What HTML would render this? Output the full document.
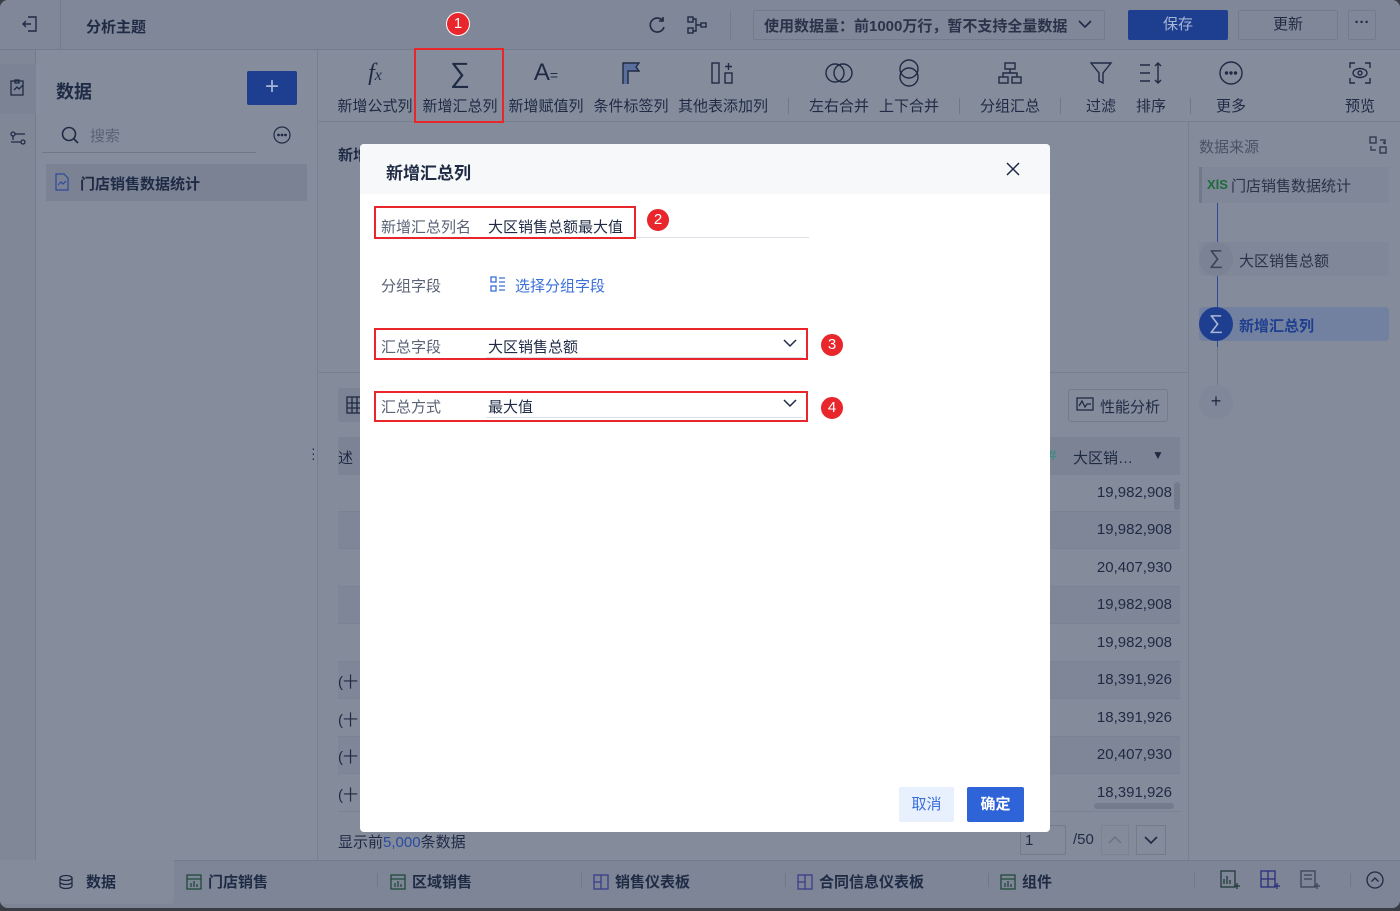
<!DOCTYPE html>
<html><head><meta charset="utf-8">
<style>
*{box-sizing:border-box;margin:0;padding:0}
body{width:1400px;height:911px;overflow:hidden;background:#3a3d44;font-family:"Liberation Sans","Noto Sans CJK SC",sans-serif;font-size:15px;color:#1f2a44;position:relative}
.a{position:absolute}
.app{position:absolute;left:0;top:0;width:1400px;height:908px;background:#848c9c;border-radius:8px;overflow:hidden}
.top{left:0;top:0;width:1400px;height:50px;background:#7f8798;border-bottom:1px solid #737b8c}
.rail{left:0;top:50px;width:36px;height:810px;background:#808898;border-right:1px solid #747c8d}
.lp{left:36px;top:50px;width:282px;height:810px;background:#858d9d;border-right:1px solid #777f90}
.tb{left:318px;top:50px;width:1082px;height:72px;background:#858d9d;border-bottom:1px solid #777f90}
.tool{position:absolute;top:56px;text-align:center;font-size:15px;color:#1f2a44}
.tool .ic{height:34px;display:flex;align-items:center;justify-content:center}
.tool .lb{margin-top:5px;white-space:nowrap;margin-left:-10px;margin-right:-10px}
.rp{left:1188px;top:122px;width:212px;height:738px;background:#848c9c;border-left:1px solid #777f90}
.bot{left:0;top:860px;width:1400px;height:48px;background:#7d8596;border-top:1px solid #737b8c}
.tab{position:absolute;top:871px;font-size:15px;font-weight:bold;color:#1f2a44;display:flex;align-items:center;gap:6px}
.row{position:absolute;left:338px;width:842px;height:37px;border-bottom:1px solid #7a8293}
.num{position:absolute;right:8px;top:9px;font-size:15px;color:#1f2a44}
.modal{left:360px;top:144px;width:690px;height:688px;background:#fff;border-radius:4px;overflow:hidden}
.mh{position:absolute;left:0;top:0;width:690px;height:50px;background:#f7f8fa}
.red{position:absolute;border:2px solid #e8262b}
.badge{position:absolute;width:24px;height:24px;border-radius:50%;background:#e8262b;color:#fff;font-size:15px;text-align:center;line-height:22px;border:1px solid #fff}
.lbl{position:absolute;font-size:15px;color:#5a6275}
.val{position:absolute;font-size:15px;color:#1f2a44}
.line{position:absolute;height:1px;background:#dcdfe6}
</style></head><body>
<div class="app">
<div class="a top">
  <svg class="a" style="left:20px;top:14px" width="20" height="20" viewBox="0 0 20 20" fill="none" stroke="#1f2a44" stroke-width="1.4"><path d="M8 3h8v14H8M11 10H3M6 7l-3 3 3 3"/></svg>
  <div class="a" style="left:60px;top:0;width:1px;height:50px;background:#737b8c"></div>
  <div class="a" style="left:86px;top:16px;font-weight:bold;font-size:15px">分析主题</div>
  <svg class="a" style="left:646px;top:14px" width="22" height="22" viewBox="0 0 22 22" fill="none" stroke="#1f2a44" stroke-width="1.6"><path d="M17 7a7 7 0 1 0 1 6M17 3v4h-4"/></svg>
  <svg class="a" style="left:686px;top:14px" width="22" height="22" viewBox="0 0 22 22" fill="none" stroke="#1f2a44" stroke-width="1.4"><rect x="2" y="3" width="5" height="5"/><rect x="2" y="14" width="5" height="5"/><rect x="15" y="9" width="5" height="4"/><path d="M7 5h3v12H7M10 11h5"/></svg>
  <div class="a" style="left:730px;top:10px;width:1px;height:30px;background:#737b8c"></div>
  <div class="a" style="left:753px;top:10px;width:352px;height:30px;border:1px solid #737b8c;border-radius:2px;font-size:15px;padding:4px 10px;color:#2a3349;font-weight:bold">使用数据量：前1000万行，暂不支持全量数据</div>
  <svg class="a" style="left:1078px;top:19px" width="14" height="10" viewBox="0 0 14 10" fill="none" stroke="#1f2a44" stroke-width="1.6"><path d="M1 2l6 6 6-6"/></svg>
  <div class="a" style="left:1128px;top:10px;width:100px;height:30px;background:#1e3f8f;border-radius:2px;color:#a8b6d6;text-align:center;line-height:30px">保存</div>
  <div class="a" style="left:1238px;top:10px;width:100px;height:30px;border:1px solid #737b8c;border-radius:2px;text-align:center;line-height:28px">更新</div>
  <div class="a" style="left:1348px;top:10px;width:28px;height:30px;border:1px solid #737b8c;border-radius:2px;text-align:center;line-height:24px;font-weight:bold">···</div>
</div>
<div class="a rail">
  <div class="a" style="left:0;top:14px;width:36px;height:50px;background:#7b8394"></div>
  <svg class="a" style="left:8px;top:28px" width="20" height="20" viewBox="0 0 20 20" fill="none" stroke="#1f2a44" stroke-width="1.3"><rect x="3" y="3" width="12" height="14"/><path d="M7 2h4v3H7zM6 12l3-3 2 2 4-4"/></svg>
  <svg class="a" style="left:8px;top:78px" width="20" height="20" viewBox="0 0 20 20" fill="none" stroke="#1f2a44" stroke-width="1.3"><circle cx="5" cy="6" r="2"/><circle cx="15" cy="14" r="2"/><path d="M7 6h10M3 14h10M5 8v4"/></svg>
</div>
<div class="a lp">
  <div class="a" style="left:20px;top:28px;font-size:18px;font-weight:bold">数据</div>
  <div class="a" style="left:211px;top:21px;width:50px;height:34px;background:#1e3f8f;border-radius:2px;color:#a8b6d6;font-size:24px;text-align:center;line-height:32px">+</div>
  <svg class="a" style="left:24px;top:75px" width="20" height="20" viewBox="0 0 20 20" fill="none" stroke="#1f2a44" stroke-width="1.6"><circle cx="9" cy="9" r="6.5"/><path d="M14 14l4 4"/></svg>
  <div class="a" style="left:54px;top:75px;color:#5a6275;font-size:15px">搜索</div>
  <div class="a" style="left:6px;top:102px;width:214px;height:1px;background:#6f7788"></div>
  <svg class="a" style="left:236px;top:75px" width="20" height="20" viewBox="0 0 20 20" fill="none" stroke="#1f2a44" stroke-width="1.2"><circle cx="10" cy="10" r="8"/><circle cx="6.5" cy="10" r=".8" fill="#1f2a44"/><circle cx="10" cy="10" r=".8" fill="#1f2a44"/><circle cx="13.5" cy="10" r=".8" fill="#1f2a44"/></svg>
  <div class="a" style="left:10px;top:114px;width:261px;height:37px;background:#7a8294"></div>
  <svg class="a" style="left:18px;top:123px" width="16" height="18" viewBox="0 0 16 18" fill="none" stroke="#2d4a9a" stroke-width="1.2"><path d="M2 1h8l4 4v12H2z"/><path d="M4 12l3-3 2 2 3-3"/></svg>
  <div class="a" style="left:44px;top:123px;font-weight:bold;font-size:15px">门店销售数据统计</div>
</div>
<div class="a tb"></div>
<div class="tool" style="left:336px;width:78px"><div class="ic"><span style="font-family:'Liberation Serif',serif;font-style:italic;font-size:24px">f<span style="font-size:16px">x</span></span></div><div class="lb">新增公式列</div></div>
<div class="tool" style="left:420px;width:80px"><div class="ic"><span style="font-size:28px;font-weight:300">&#8721;</span></div><div class="lb">新增汇总列</div></div>
<div class="tool" style="left:506px;width:80px"><div class="ic"><span style="font-size:24px">A<span style="font-size:14px">=</span></span></div><div class="lb">新增赋值列</div></div>
<div class="tool" style="left:591px;width:80px"><div class="ic"><svg width="22" height="24" viewBox="0 0 22 24" fill="none" stroke="#1f2a44" stroke-width="1.4"><path d="M3 23V2h16l-3 4 3 4H8v13" fill="#5b6f9e"/></svg></div><div class="lb">条件标签列</div></div>
<div class="tool" style="left:676px;width:94px"><div class="ic"><svg width="26" height="24" viewBox="0 0 26 24" fill="none" stroke="#1f2a44" stroke-width="1.4"><rect x="2" y="2" width="7" height="20"/><rect x="15" y="12" width="7" height="10"/><path d="M18.5 2v7M15 5.5h7"/></svg></div><div class="lb">其他表添加列</div></div>
<div class="a" style="left:788px;top:98px;width:1px;height:16px;background:#6f7788"></div>
<div class="tool" style="left:806px;width:66px"><div class="ic"><svg width="30" height="24" viewBox="0 0 30 24" fill="none" stroke="#1f2a44" stroke-width="1.4"><circle cx="11" cy="12" r="9"/><circle cx="19" cy="12" r="9"/></svg></div><div class="lb">左右合并</div></div>
<div class="tool" style="left:876px;width:66px"><div class="ic"><svg width="24" height="30" viewBox="0 0 24 30" fill="none" stroke="#1f2a44" stroke-width="1.4"><circle cx="12" cy="11" r="9"/><circle cx="12" cy="19" r="9"/></svg></div><div class="lb">上下合并</div></div>
<div class="a" style="left:959px;top:98px;width:1px;height:16px;background:#6f7788"></div>
<div class="tool" style="left:977px;width:66px"><div class="ic"><svg width="26" height="24" viewBox="0 0 26 24" fill="none" stroke="#1f2a44" stroke-width="1.4"><rect x="8" y="2" width="10" height="6"/><rect x="2" y="16" width="9" height="6"/><rect x="15" y="16" width="9" height="6"/><path d="M13 8v4M6 16v-4h14v4"/></svg></div><div class="lb">分组汇总</div></div>
<div class="a" style="left:1060px;top:98px;width:1px;height:16px;background:#6f7788"></div>
<div class="tool" style="left:1078px;width:46px"><div class="ic"><svg width="24" height="26" viewBox="0 0 24 26" fill="none" stroke="#1f2a44" stroke-width="1.4"><path d="M2 3h20l-8 10v10l-4-2v-8z"/></svg></div><div class="lb">过滤</div></div>
<div class="tool" style="left:1128px;width:46px"><div class="ic"><svg width="26" height="24" viewBox="0 0 26 24" fill="none" stroke="#1f2a44" stroke-width="1.4"><path d="M2 4h10M2 12h10M2 20h10M20 2v20M17 5l3-3 3 3M17 19l3 3 3-3"/></svg></div><div class="lb">排序</div></div>
<div class="a" style="left:1190px;top:98px;width:1px;height:16px;background:#6f7788"></div>
<div class="tool" style="left:1208px;width:46px"><div class="ic"><svg width="26" height="26" viewBox="0 0 26 26" fill="none" stroke="#1f2a44" stroke-width="1.4"><circle cx="13" cy="13" r="11"/><circle cx="8.5" cy="13" r="1" fill="#1f2a44"/><circle cx="13" cy="13" r="1" fill="#1f2a44"/><circle cx="17.5" cy="13" r="1" fill="#1f2a44"/></svg></div><div class="lb">更多</div></div>
<div class="tool" style="left:1337px;width:46px"><div class="ic"><svg width="24" height="24" viewBox="0 0 24 24" fill="none" stroke="#1f2a44" stroke-width="1.4"><path d="M2 7V2h5M17 2h5v5M22 17v5h-5M7 22H2v-5"/><ellipse cx="12" cy="12" rx="7" ry="4.5"/><circle cx="12" cy="12" r="2"/></svg></div><div class="lb">预览</div></div>
<div class="red" style="left:414px;top:48px;width:90px;height:75px"></div>
<div class="badge" style="left:446px;top:12px">1</div>

<div class="a" style="left:338px;top:144px;font-weight:bold">新增</div>
<div class="a" style="left:318px;top:372px;width:870px;height:1px;background:#777f90"></div>
<div class="a" style="left:338px;top:388px;width:30px;height:34px;background:#7b8394;border-radius:3px"></div>
<svg class="a" style="left:346px;top:396px" width="16" height="18" viewBox="0 0 16 18" fill="none" stroke="#1f2a44" stroke-width="1.3"><rect x="1" y="1" width="14" height="16"/><path d="M1 7h14M1 12h14M6 1v16M11 1v16"/></svg>
<div class="a" style="left:311px;top:446px;color:#1f2a44;font-size:14px;line-height:5px">·<br>·<br>·</div>
<div class="a" style="left:1068px;top:389px;width:100px;height:33px;border:1px solid #737b8c;border-radius:3px;font-size:15px;padding:6px 0 0 31px">性能分析</div>
<svg class="a" style="left:1076px;top:397px" width="18" height="16" viewBox="0 0 18 16" fill="none" stroke="#1f2a44" stroke-width="1.3"><rect x="1" y="1" width="16" height="12"/><path d="M3 9l3-5 3 6 2-3h4"/></svg>
<div class="a" style="left:338px;top:437px;width:842px;height:38px;background:#7b8395"></div>
<div class="a" style="left:338px;top:447px">述</div>
<div class="a" style="left:1048px;top:447px;color:#2e8a80">#</div>
<div class="a" style="left:1073px;top:447px">大区销…</div>
<div class="a" style="left:1152px;top:448px;font-size:12px">▼</div>
<div class="row" style="top:475px;background:#848c9c"><span class="num">19,982,908</span></div>
<div class="row" style="top:512px;background:#7e8697"><span class="num">19,982,908</span></div>
<div class="row" style="top:550px;background:#848c9c"><span class="num">20,407,930</span></div>
<div class="row" style="top:587px;background:#7e8697"><span class="num">19,982,908</span></div>
<div class="row" style="top:625px;background:#848c9c"><span class="num">19,982,908</span></div>
<div class="row" style="top:662px;background:#7e8697"><span class="num">18,391,926</span><span style="position:absolute;left:0;top:9px">(十</span></div>
<div class="row" style="top:700px;background:#848c9c"><span class="num">18,391,926</span><span style="position:absolute;left:0;top:9px">(十</span></div>
<div class="row" style="top:737px;background:#7e8697"><span class="num">20,407,930</span><span style="position:absolute;left:0;top:9px">(十</span></div>
<div class="row" style="top:775px;background:#848c9c"><span class="num">18,391,926</span><span style="position:absolute;left:0;top:9px">(十</span></div>
<div class="a" style="left:1174px;top:482px;width:6px;height:28px;background:#737b8c;border-radius:3px"></div>
<div class="a" style="left:1094px;top:803px;width:80px;height:6px;background:#737b8c;border-radius:3px"></div>
<div class="a" style="left:338px;top:831px">显示前<span style="color:#2b4aa0">5,000</span>条数据</div>
<div class="a" style="left:1020px;top:825px;width:46px;height:30px;border:1px solid #737b8c;border-radius:2px;padding:6px 0 0 4px">1</div>
<div class="a" style="left:1073px;top:831px">/50</div>
<div class="a" style="left:1101px;top:825px;width:28px;height:30px;border:1px solid #7a8293"></div>
<svg class="a" style="left:1108px;top:835px" width="14" height="10" viewBox="0 0 14 10" fill="none" stroke="#6a7284" stroke-width="1.5"><path d="M1 8l6-6 6 6"/></svg>
<div class="a" style="left:1136px;top:825px;width:30px;height:30px;border:1px solid #737b8c"></div>
<svg class="a" style="left:1144px;top:835px" width="14" height="10" viewBox="0 0 14 10" fill="none" stroke="#1f2a44" stroke-width="1.6"><path d="M1 2l6 6 6-6"/></svg>

<div class="a rp">
  <div class="a" style="left:10px;top:14px;color:#4a5265;font-size:15px">数据来源</div>
  <svg class="a" style="left:180px;top:14px" width="18" height="18" viewBox="0 0 18 18" fill="none" stroke="#2a3349" stroke-width="1.3"><rect x="1" y="1" width="6" height="6"/><rect x="11" y="11" width="6" height="6"/><path d="M11 4h5v4M14 6l2 2M7 14H2v-4"/></svg>
  <div class="a" style="left:10px;top:45px;width:190px;height:36px;background:#7f8798;border-left:3px solid #707889"></div>
  <div class="a" style="left:18px;top:55px;color:#1f6b3a;font-size:13px;font-weight:bold">XlS</div>
  <div class="a" style="left:42px;top:53px;color:#2a3349">门店销售数据统计</div>
  <div class="a" style="left:28px;top:81px;width:1px;height:200px;background:#2d4a9a"></div>
  <div class="a" style="left:28px;top:225px;width:1px;height:50px;background:#6f7788"></div>
  <div class="a" style="left:10px;top:120px;width:190px;height:34px;background:#7f8798;border-radius:4px"></div>
  <div class="a" style="left:10px;top:120px;width:34px;height:34px;background:#7a8294;border-radius:50%;text-align:center;line-height:32px;font-size:20px;color:#3a4358">&#8721;</div>
  <div class="a" style="left:50px;top:128px;color:#2a3349">大区销售总额</div>
  <div class="a" style="left:10px;top:185px;width:190px;height:34px;background:#7281a0;border-radius:4px"></div>
  <div class="a" style="left:10px;top:185px;width:34px;height:34px;background:#1e3f8f;border-radius:50%;text-align:center;line-height:32px;font-size:20px;color:#a8b6d6">&#8721;</div>
  <div class="a" style="left:50px;top:193px;color:#1e3f8f;font-weight:bold">新增汇总列</div>
  <div class="a" style="left:10px;top:263px;width:34px;height:34px;background:#7f8798;border-radius:50%;text-align:center;line-height:32px;font-size:18px">+</div>
</div>

<div class="a bot"></div>
<div class="a" style="left:0;top:860px;width:174px;height:44px;background:#848c9c;border-radius:0 0 4px 0"></div>
<div class="tab" style="left:58px"><svg width="16" height="16" viewBox="0 0 16 16" fill="none" stroke="#1f2a44" stroke-width="1.3"><ellipse cx="8" cy="4" rx="6" ry="2.5"/><path d="M2 4v8c0 1.4 2.7 2.5 6 2.5s6-1.1 6-2.5V4M2 8c0 1.4 2.7 2.5 6 2.5S14 9.4 14 8"/></svg><span style="margin-left:6px">数据</span></div>
<div class="tab" style="left:186px"><svg width="16" height="16" viewBox="0 0 16 16" fill="none" stroke="#1f4a3a" stroke-width="1.3"><rect x="1" y="1" width="14" height="14"/><path d="M1 5h14M5 13V9M8 13V7M11 13V10"/></svg>门店销售</div>
<div class="a" style="left:377px;top:873px;width:1px;height:14px;background:#6f7788"></div>
<div class="tab" style="left:390px"><svg width="16" height="16" viewBox="0 0 16 16" fill="none" stroke="#1f4a3a" stroke-width="1.3"><rect x="1" y="1" width="14" height="14"/><path d="M1 5h14M5 13V9M8 13V7M11 13V10"/></svg>区域销售</div>
<div class="a" style="left:581px;top:873px;width:1px;height:14px;background:#6f7788"></div>
<div class="tab" style="left:593px"><svg width="16" height="16" viewBox="0 0 16 16" fill="none" stroke="#3a3f8a" stroke-width="1.3"><rect x="1" y="1" width="14" height="14"/><path d="M8 1v14M1 8h7"/></svg>销售仪表板</div>
<div class="a" style="left:785px;top:873px;width:1px;height:14px;background:#6f7788"></div>
<div class="tab" style="left:797px"><svg width="16" height="16" viewBox="0 0 16 16" fill="none" stroke="#3a3f8a" stroke-width="1.3"><rect x="1" y="1" width="14" height="14"/><path d="M8 1v14M1 8h7"/></svg>合同信息仪表板</div>
<div class="a" style="left:988px;top:873px;width:1px;height:14px;background:#6f7788"></div>
<div class="tab" style="left:1000px"><svg width="16" height="16" viewBox="0 0 16 16" fill="none" stroke="#1f4a3a" stroke-width="1.3"><rect x="1" y="1" width="14" height="14"/><path d="M1 5h14M5 13V9M8 13V7M11 13V10"/></svg>组件</div>
<div class="a" style="left:1194px;top:873px;width:1px;height:14px;background:#6f7788"></div>
<svg class="a" style="left:1220px;top:870px" width="20" height="20" viewBox="0 0 20 20" fill="none" stroke="#1f3a3a" stroke-width="1.3"><rect x="1" y="1" width="14" height="16"/><path d="M4 14V9M7 14V6M10 14V10M14 16h6M17 13v6"/></svg>
<svg class="a" style="left:1260px;top:870px" width="20" height="20" viewBox="0 0 20 20" fill="none" stroke="#2a2f7a" stroke-width="1.3"><rect x="1" y="1" width="14" height="16"/><path d="M8 1v16M1 9h14M14 16h6M17 13v6"/></svg>
<svg class="a" style="left:1300px;top:870px" width="20" height="20" viewBox="0 0 20 20" fill="none" stroke="#3a4358" stroke-width="1.3"><rect x="1" y="1" width="14" height="16"/><path d="M4 5h8M4 9h8M14 16h6M17 13v6"/></svg>
<div class="a" style="left:1350px;top:873px;width:1px;height:14px;background:#6f7788"></div>
<svg class="a" style="left:1366px;top:871px" width="18" height="18" viewBox="0 0 18 18" fill="none" stroke="#1f2a44" stroke-width="1.3"><circle cx="9" cy="9" r="8"/><path d="M5.5 10.5L9 7l3.5 3.5"/></svg>

<div class="a modal">
  <div class="mh"></div>
  <div class="a" style="left:26px;top:15px;font-size:17px;font-weight:bold;color:#1f2a44">新增汇总列</div>
  <svg class="a" style="left:646px;top:18px" width="14" height="14" viewBox="0 0 14 14" stroke="#1f2a44" stroke-width="1.5"><path d="M1 1l12 12M13 1L1 13"/></svg>
  <div class="lbl" style="left:21px;top:72px">新增汇总列名</div>
  <div class="val" style="left:128px;top:72px">大区销售总额最大值</div>
  <div class="line" style="left:126px;top:93px;width:323px"></div>
  <div class="lbl" style="left:21px;top:131px">分组字段</div>
  <svg class="a" style="left:130px;top:132px" width="16" height="16" viewBox="0 0 16 16" fill="none" stroke="#3a6fd8" stroke-width="1.3"><rect x="1" y="1" width="5" height="5"/><rect x="1" y="10" width="5" height="5"/><path d="M9 2h6M9 6h6M9 10h6M9 14h6"/></svg>
  <div class="val" style="left:155px;top:131px;color:#3a6fd8">选择分组字段</div>
  <div class="lbl" style="left:21px;top:192px">汇总字段</div>
  <div class="val" style="left:128px;top:192px">大区销售总额</div>
  <svg class="a" style="left:423px;top:194px" width="14" height="10" viewBox="0 0 14 10" fill="none" stroke="#1f2a44" stroke-width="1.5"><path d="M1 2l6 6 6-6"/></svg>
  <div class="line" style="left:126px;top:213px;width:317px"></div>
  <div class="lbl" style="left:21px;top:252px">汇总方式</div>
  <div class="val" style="left:128px;top:252px">最大值</div>
  <svg class="a" style="left:423px;top:254px" width="14" height="10" viewBox="0 0 14 10" fill="none" stroke="#1f2a44" stroke-width="1.5"><path d="M1 2l6 6 6-6"/></svg>
  <div class="line" style="left:126px;top:273px;width:317px"></div>
  <div class="a" style="left:539px;top:643px;width:55px;height:35px;background:#e8f0fe;border-radius:2px;color:#3a6fd8;text-align:center;line-height:35px">取消</div>
  <div class="a" style="left:607px;top:643px;width:57px;height:35px;background:#2f64d8;border-radius:2px;color:#fff;text-align:center;line-height:35px;font-weight:bold">确定</div>
</div>
<div class="red" style="left:374px;top:206px;width:262px;height:33px"></div>
<div class="badge" style="left:646px;top:208px">2</div>
<div class="red" style="left:374px;top:328px;width:434px;height:32px"></div>
<div class="badge" style="left:820px;top:333px">3</div>
<div class="red" style="left:374px;top:391px;width:434px;height:31px"></div>
<div class="badge" style="left:820px;top:396px">4</div>
</div>
</body></html>
